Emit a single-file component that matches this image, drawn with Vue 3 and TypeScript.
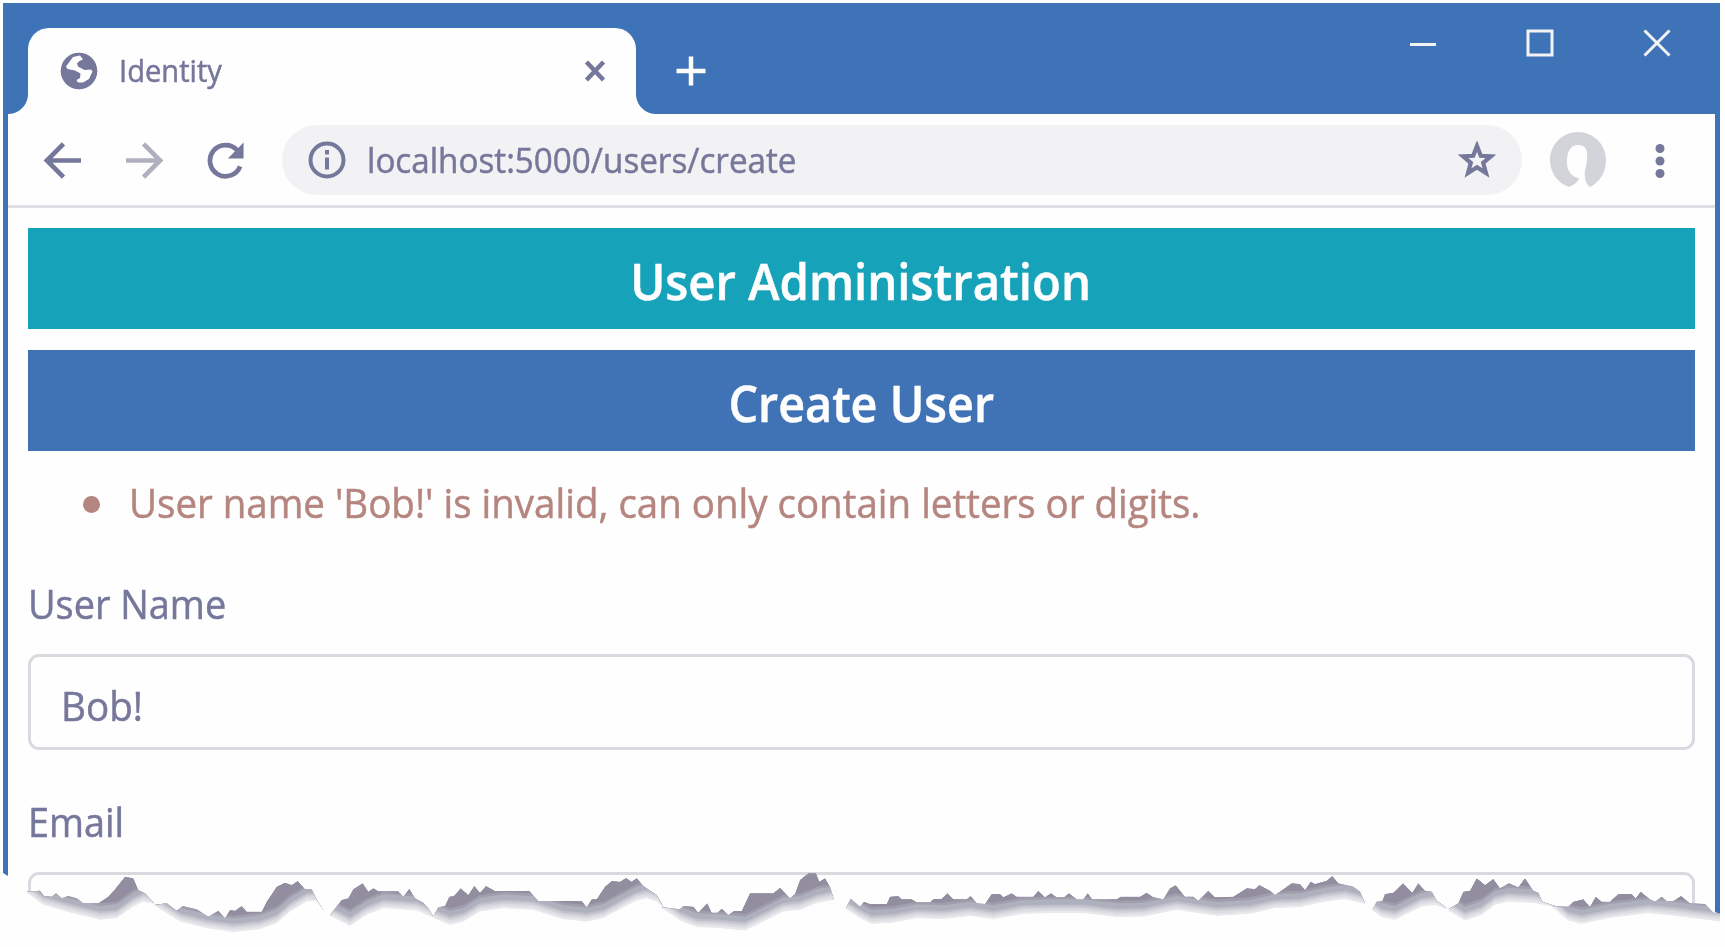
<script setup lang="ts">
import { ref } from 'vue'

type Point = [number, number]
interface Shred {
  origin: number
  top: Point[]
  bottom: Point[]
}

const tabTitle = 'Identity'
const address = 'localhost:5000/users/create'
const errors = ref<string[]>(["User name 'Bob!' is invalid, can only contain letters or digits."])
const userName = ref('Bob!')

// Torn paper edge: each shred is listed in thirds of a pixel from its own origin.
const shreds: Shred[] = [
  {
    origin: 0,
    top: [[80, 125], [120, 122], [132, 138], [155, 140], [168, 130], [185, 145], [205, 138], [230, 145], [250, 160], [295, 160], [325, 140], [345, 118], [375, 80], [400, 85], [415, 120], [435, 130], [462, 160]],
    bottom: [[80, 128], [130, 165], [200, 185], [300, 210], [350, 205], [400, 170], [430, 155], [462, 162]],
  },
  {
    origin: 0,
    top: [[462, 165], [500, 160], [530, 182], [548, 168], [590, 178], [625, 200], [655, 182], [675, 205], [690, 180], [705, 182], [725, 168], [740, 185], [785, 185], [800, 155], [830, 110], [855, 98], [875, 105], [893, 93], [915, 118], [935, 118], [950, 150], [975, 187]],
    bottom: [[480, 178], [540, 215], [620, 235], [700, 247], [780, 238], [830, 220], [870, 185], [920, 155], [950, 153], [975, 187]],
  },
  {
    origin: 0,
    top: [[990, 195], [1025, 150], [1045, 145], [1060, 118], [1088, 100], [1105, 125], [1120, 115], [1135, 124], [1195, 124], [1210, 140], [1228, 116], [1245, 145], [1270, 158], [1285, 175], [1300, 200]],
    bottom: [[990, 198], [1050, 228], [1100, 195], [1150, 175], [1200, 178], [1250, 182], [1300, 203]],
  },
  {
    origin: 1290,
    top: [[10, 200], [25, 172], [45, 168], [58, 140], [72, 138], [92, 115], [115, 135], [133, 108], [150, 128], [168, 108], [195, 123], [298, 123], [325, 153], [455, 153], [470, 172], [485, 148], [500, 148], [525, 110], [545, 93], [570, 95], [588, 84], [605, 95], [620, 84], [640, 108], [680, 135], [700, 170]],
    bottom: [[10, 205], [60, 225], [100, 215], [150, 185], [220, 175], [310, 180], [400, 208], [470, 215], [520, 205], [570, 178], [620, 152], [650, 145], [680, 155], [700, 172]],
  },
  {
    origin: 1290,
    top: [[695, 172], [750, 178], [760, 168], [790, 170], [805, 188], [832, 160], [845, 188], [862, 188], [875, 176], [895, 195], [912, 183], [935, 183], [960, 130], [1030, 130], [1050, 113], [1080, 145], [1095, 132], [1110, 90], [1135, 70], [1158, 70], [1168, 95], [1185, 85], [1200, 110], [1212, 150]],
    bottom: [[695, 174], [750, 212], [800, 232], [870, 235], [945, 242], [1000, 215], [1060, 185], [1110, 180], [1160, 160], [1210, 150]],
  },
  {
    origin: 2550,
    top: [[-12, 175], [2, 146], [30, 170], [42, 155], [60, 162], [110, 162], [120, 140], [145, 138], [155, 148], [185, 148], [200, 157], [240, 157], [250, 148], [275, 146], [292, 130], [310, 148], [350, 148], [362, 138], [380, 160], [405, 162], [425, 132], [450, 132], [460, 142], [485, 130], [500, 140], [550, 140], [565, 122], [585, 142], [603, 130], [620, 142], [642, 142], [657, 130], [680, 148], [700, 148], [713, 130], [727, 148], [800, 148], [812, 140], [870, 140], [890, 128], [910, 142], [940, 148], [960, 115], [977, 106], [1005, 140], [1030, 140], [1045, 152], [1075, 122], [1095, 142], [1150, 140], [1190, 115], [1215, 117], [1228, 105], [1260, 122], [1275, 135], [1300, 118], [1325, 100], [1350, 102], [1365, 120], [1382, 95], [1395, 102], [1430, 92], [1447, 78], [1465, 100], [1510, 110], [1530, 125], [1545, 160]],
    bottom: [[-12, 178], [30, 205], [65, 222], [130, 218], [200, 205], [280, 208], [360, 198], [430, 208], [520, 192], [600, 190], [700, 190], [800, 202], [880, 200], [980, 180], [1100, 198], [1200, 192], [1275, 175], [1350, 172], [1425, 155], [1485, 148], [1543, 162]],
  },
  {
    origin: 3825,
    top: [[292, 180], [305, 155], [322, 153], [330, 132], [355, 128], [384, 100], [412, 128], [430, 100], [450, 122], [470, 125], [485, 152], [515, 175]],
    bottom: [[292, 182], [320, 202], [360, 210], [400, 190], [440, 170], [480, 165], [515, 178]],
  },
  {
    origin: 3825,
    top: [[520, 178], [550, 160], [565, 125], [585, 122], [605, 85], [630, 105], [655, 87], [675, 115], [702, 100], [730, 112], [750, 85], [775, 122], [790, 128], [802, 155], [840, 168]],
    bottom: [[520, 182], [570, 212], [620, 195], [660, 165], [700, 155], [780, 160], [840, 172]],
  },
  {
    origin: 3825,
    top: [[830, 168], [880, 170], [895, 155], [925, 148], [945, 170], [962, 140], [980, 155], [1005, 155], [1030, 132], [1070, 132], [1082, 145], [1097, 125], [1125, 148], [1140, 155], [1160, 140], [1175, 153], [1195, 153], [1218, 138], [1245, 160], [1290, 162], [1315, 188], [1335, 190]],
    bottom: [[830, 170], [880, 212], [920, 222], [1000, 205], [1120, 190], [1200, 198], [1335, 215]],
  },
]

const layers = [
  { lift: 0, fill: '#e9e9ed' },
  { lift: 7, fill: '#dddde3' },
  { lift: 14, fill: '#d0d0d8' },
  { lift: 20, fill: '#bfc0ca' },
  { lift: 26, fill: '#afb0bd' },
  { lift: 42, fill: '#a09eac' },
  { lift: 50, fill: '#938e9f' },
]

function outline(shred: Shred, lift: number): string {
  const lower = [...shred.bottom].reverse().map(([x, y]): Point => [x, y - lift])
  return [...shred.top, ...lower]
    .map(([x, y], i) => `${i ? 'L' : 'M'}${((x + shred.origin) / 3).toFixed(1)} ${(y / 3).toFixed(1)}`)
    .join('') + 'Z'
}
</script>

<template>
  <div class="page">
    <div class="window">
      <header class="titlebar">
        <div class="tab">
          <svg class="globe" viewBox="0 0 38 38">
            <circle cx="19" cy="19" r="18.3" fill="#75779b" />
            <path d="M20 3.500 13 5 6 14.500 7.500 17 15 18.500 20.500 21.500 20 26 16.500 28 18 30.500 23 30.500 29 27 32.500 19.500 31 17.500 24.500 18 18 14.500 17 11.500 19.500 9 23 7.500Z" fill="#fefefe" />
          </svg>
          <span class="tab-title">{{ tabTitle }}</span>
          <svg class="tab-close" viewBox="0 0 24 24"><path d="M3.500 3 20.500 21M20.500 3 3.500 21" /></svg>
        </div>
        <svg class="new-tab" viewBox="0 0 32 32"><path d="M16 1.500V30.500M1.500 16H30.500" /></svg>
        <div class="controls">
          <svg viewBox="0 0 30 30"><path d="M2 16.500H28" /></svg>
          <svg viewBox="0 0 30 30"><rect x="3" y="3" width="24" height="24" /></svg>
          <svg viewBox="0 0 30 30"><path d="M2.500 2.500 27.500 27.500M27.500 2.500 2.500 27.500" /></svg>
        </div>
      </header>

      <nav class="toolbar">
        <svg class="nav-icon back" viewBox="0 0 40 40"><path d="M39 20H4M21 3 4 20 21 37" /></svg>
        <svg class="nav-icon forward" viewBox="0 0 40 40"><path d="M1 20H36M19 3 36 20 19 37" /></svg>
        <svg class="nav-icon reload" viewBox="0 0 40 40">
          <path d="M35 26A16 16 0 1 1 32 9.500" />
          <path class="solid" d="M38.500 1.500V18H22.500Z" />
        </svg>
        <div class="omnibox">
          <svg class="info" viewBox="0 0 38 38">
            <circle cx="19" cy="19" r="16.500" />
            <path d="M19 16.500V28.500M19 9V13.500" />
          </svg>
          <span class="address">{{ address }}</span>
          <svg class="star" viewBox="0 0 38 38">
            <path d="M19 5 22.800 14.800 33 15.300 25.200 21.800 28 32 19 26.300 10 32 12.800 21.800 5 15.300 15.200 14.800Z" />
          </svg>
        </div>
        <svg class="avatar" viewBox="0 0 58 58">
          <path fill="#d3d4da" d="M29 1C13 1 1 14 1 29C1 42 9 52 20 56C26 53 29 51 30 47C21 46 17 37 18 28C19 18 23 14 29 14C36 14 39 18 38 29C37 37 35 41 36 46C36 50 38 54 41 56C51 51 57 41 57 29C57 13 44 1 29 1Z" />
        </svg>
        <svg class="menu" viewBox="0 0 12 38">
          <circle cx="6" cy="6.500" r="4.500" /><circle cx="6" cy="19" r="4.500" /><circle cx="6" cy="31.500" r="4.500" />
        </svg>
      </nav>

      <main class="content">
        <h1 class="banner info-banner"><span class="text t-admin">User Administration</span></h1>
        <h2 class="banner primary-banner"><span class="text t-create">Create User</span></h2>
        <ul class="errors">
          <li v-for="message in errors" :key="message"><span class="text t-error">{{ message }}</span></li>
        </ul>
        <div class="group">
          <label class="label text t-name">User Name</label>
          <div class="field"><span class="text t-bob">{{ userName }}</span></div>
        </div>
        <div class="group">
          <label class="label text t-email">Email</label>
          <div class="field"></div>
        </div>
      </main>
    </div>

    <svg class="tear" viewBox="0 0 1725 97" width="1725" height="97">
      <defs>
        <clipPath v-for="(shred, i) in shreds" :id="`shred-${i}`" :key="i"><path :d="outline(shred, 0)" /></clipPath>
      </defs>
      <g v-for="(shred, i) in shreds" :key="i" :clip-path="`url(#shred-${i})`">
        <path v-for="layer in layers" :key="layer.lift" :d="outline(shred, layer.lift)" :fill="layer.fill" />
      </g>
    </svg>
  </div>
</template>

<style>
body {
  margin: 0;
  background: #fefefe;
}
</style>

<style scoped>
* {
  box-sizing: border-box;
}

.page {
  position: relative;
  width: 1725px;
  height: 947px;
  overflow: hidden;
  padding: 3px 5px 0 3px;
  background: #fefefe;
  font-family: "Open Sans", "Noto Sans", sans-serif;
  color: #75779b;
}

.window {
  display: flex;
  flex-direction: column;
  height: 944px;
  border: solid #3f73b7;
  border-width: 0 5px;
  background: #fefefe;
  clip-path: polygon(0 0, 100% 0, 100% 911px, 1690px 900px, 25px 889px, 5px 873px, 0 870px);
}

svg {
  display: block;
  flex: none;
}

.titlebar {
  display: flex;
  flex: none;
  align-items: flex-start;
  height: 111px;
  background: #3f73b7;
}

.tab {
  position: relative;
  display: flex;
  align-items: center;
  width: 608px;
  height: 86px;
  margin: 25px 0 0 20px;
  padding: 0 29px 0 32px;
  border-radius: 21px 21px 0 0;
  background: #fefefe;
}

.tab::before,
.tab::after {
  content: "";
  position: absolute;
  bottom: 0;
  width: 20px;
  height: 20px;
}

.tab::before {
  left: -20px;
  background: radial-gradient(circle at 0 0, #3f73b7 19.5px, #fefefe 20.5px);
}

.tab::after {
  right: -20px;
  background: radial-gradient(circle at 100% 0, #3f73b7 19.5px, #fefefe 20.5px);
}

.globe {
  width: 38px;
  height: 38px;
}

.text,
.tab-title,
.address {
  display: inline-block;
  transform-origin: 0 50%;
  white-space: nowrap;
  -webkit-text-stroke: 0.5px currentColor;
}

.tab-title {
  margin: 0 0 2px 21px;
  font-size: 30.5px;
  line-height: 40px;
  transform: scaleX(0.955);
}

.tab-close {
  width: 24px;
  height: 24px;
  margin-left: auto;
  fill: none;
  stroke: #75779b;
  stroke-width: 4.5;
}

.new-tab {
  width: 32px;
  height: 32px;
  margin: 52px 0 0 39px;
  fill: none;
  stroke: #fefefe;
  stroke-width: 4.5;
}

.controls {
  display: flex;
  gap: 87px;
  margin: 25px 43px 0 auto;
}

.controls svg {
  width: 30px;
  height: 30px;
  fill: none;
  stroke: #f3f3f6;
  stroke-width: 3;
}

.toolbar {
  display: flex;
  flex: none;
  align-items: center;
  height: 94px;
  padding: 1px 49px 0 35px;
  border-bottom: 3px solid #dfdfe4;
}

.nav-icon {
  width: 39px;
  height: 39px;
  fill: none;
  stroke: #75779b;
  stroke-width: 4.8;
}

.nav-icon .solid {
  fill: #75779b;
  stroke: none;
}

.forward {
  margin-left: 43px;
  stroke: #aeb0be;
}

.reload {
  margin-left: 42px;
}

.omnibox {
  display: flex;
  align-items: center;
  width: 1240px;
  height: 70px;
  margin-left: 37px;
  padding: 0 26px;
  border-radius: 35px;
  background: #f2f2f4;
}

.info {
  width: 38px;
  height: 38px;
  fill: none;
  stroke: #75779b;
  stroke-width: 4;
}

.address {
  margin: 0 auto 0 21px;
  font-size: 35px;
  line-height: 60px;
  transform: scaleX(0.949);
}

.star {
  width: 38px;
  height: 38px;
  fill: none;
  stroke: #75779b;
  stroke-width: 4.2;
}

.avatar {
  width: 58px;
  height: 58px;
  margin-left: 27px;
}

.menu {
  width: 12px;
  height: 38px;
  margin: 2px 0 0 auto;
  fill: #75779b;
}

.content {
  display: flex;
  flex-direction: column;
  flex: 1;
  padding: 20px 20px 0 20px;
}

.banner {
  height: 101px;
  margin: 0 0 21px;
  padding-top: 3px;
  color: #fefefe;
  font-size: 50px;
  font-weight: 600;
  line-height: 101px;
  text-align: center;
  white-space: nowrap;
}

.banner .text {
  transform-origin: 50% 50%;
}

.t-admin {
  transform: translateX(-1px) scaleX(0.946);
}

.t-create {
  transform: scaleX(0.934);
}

.info-banner {
  background: #16a2b9;
}

.primary-banner {
  background: #4073b6;
}

.errors {
  margin: 1px 0 0;
  padding: 0;
  list-style: none;
  color: #b5857f;
  font-size: 40px;
  line-height: 60px;
  white-space: nowrap;
}

.errors li {
  display: flex;
  align-items: center;
  padding-left: 55px;
}

.errors li::before {
  content: "";
  width: 17px;
  height: 17px;
  margin: 2px 29px 0 0;
  border-radius: 50%;
  background: #b5857f;
}

.t-error {
  transform: scaleX(0.962);
}

.t-name {
  transform: scaleX(0.947);
}

.t-email {
  transform: scaleX(0.944);
}

.t-bob {
  transform: scaleX(0.965);
}

.group {
  display: flex;
  flex-direction: column;
  align-items: flex-start;
  margin-top: 41px;
}

.label {
  font-size: 40px;
  line-height: 60px;
}

.field {
  width: 100%;
  height: 96px;
  margin-top: 20px;
  padding: 5px 0 0 30px;
  border: 3px solid #d9d9df;
  border-radius: 11px;
  font-size: 40px;
  line-height: 88px;
}

.group + .group {
  margin-top: 42px;
}

.tear {
  position: absolute;
  left: 0;
  top: 850px;
  filter: blur(0.7px);
}
</style>
